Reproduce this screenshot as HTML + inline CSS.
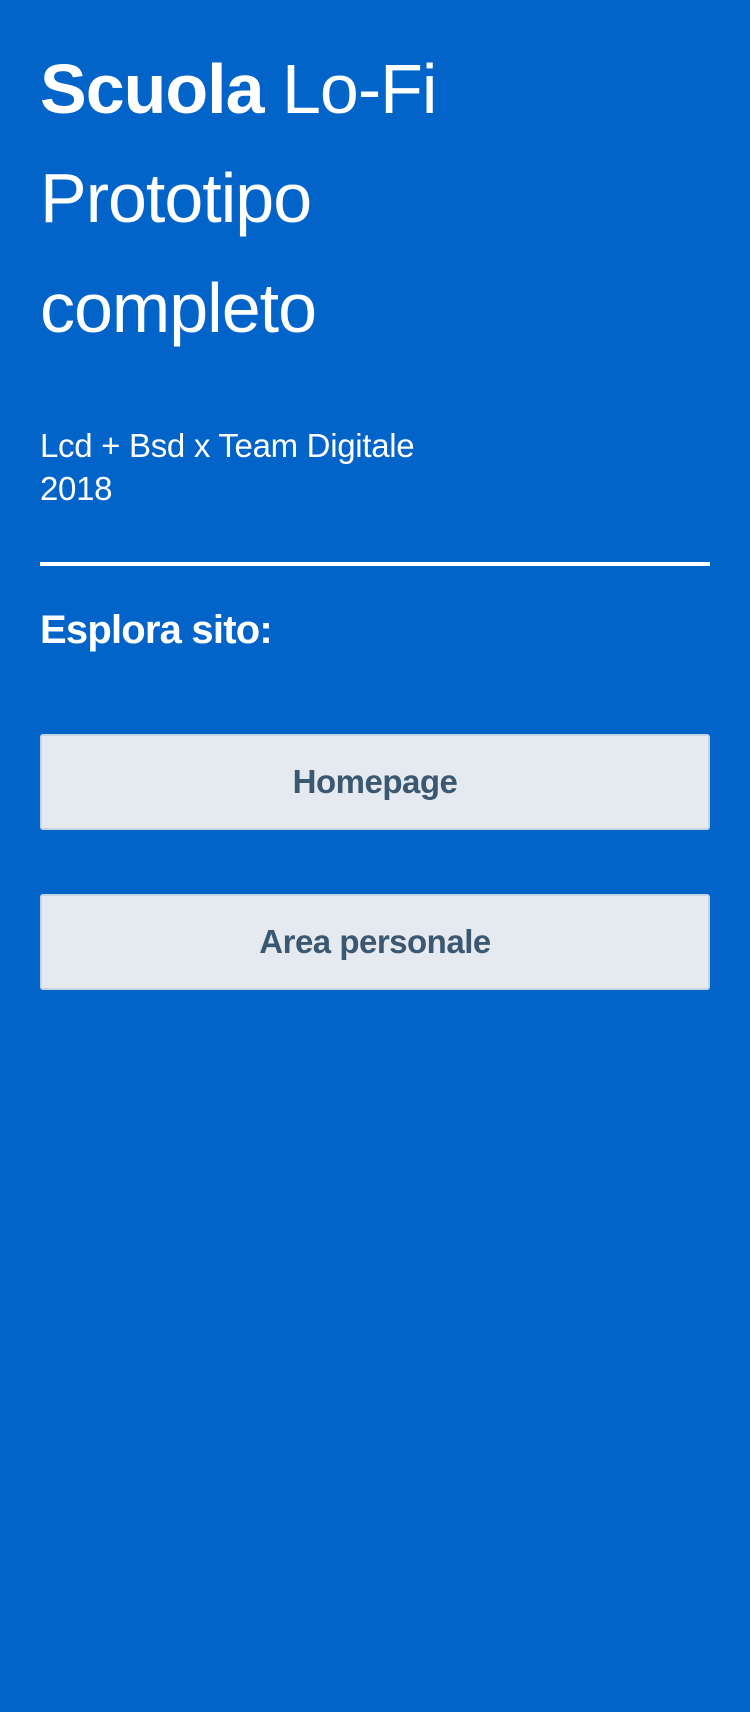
<!DOCTYPE html>
<html><head><meta charset="utf-8"><style>
html,body{margin:0;padding:0;width:750px;height:1712px;background:#0264c9;overflow:hidden;font-family:"Liberation Sans",sans-serif;color:#fff}
.t{position:absolute;left:40px;font-size:70px;line-height:109px;letter-spacing:-1px}
.s{position:absolute;left:40px;top:424px;font-size:33px;line-height:43px;letter-spacing:-0.3px}
.hr{position:absolute;left:40px;width:670px;top:562px;height:4px;background:#fff}
.e{position:absolute;left:40px;top:608px;font-size:40px;font-weight:bold;letter-spacing:-0.8px}
.b{position:absolute;left:40px;width:666px;height:92px;background:#e5eaf1;border:2px solid #c5d3e3;border-radius:3px;color:#3b5870;font-weight:bold;font-size:33px;text-align:center;line-height:92px;letter-spacing:-0.5px}
</style></head><body>
<div class="t" style="top:35px"><b>Scuola</b> Lo-Fi</div>
<div class="t" style="top:144px">Prototipo</div>
<div class="t" style="top:254px">completo</div>
<div class="s">Lcd + Bsd x Team Digitale<br>2018</div>
<div class="hr"></div>
<div class="e">Esplora sito:</div>
<div class="b" style="top:734px">Homepage</div>
<div class="b" style="top:894px">Area personale</div>
</body></html>
